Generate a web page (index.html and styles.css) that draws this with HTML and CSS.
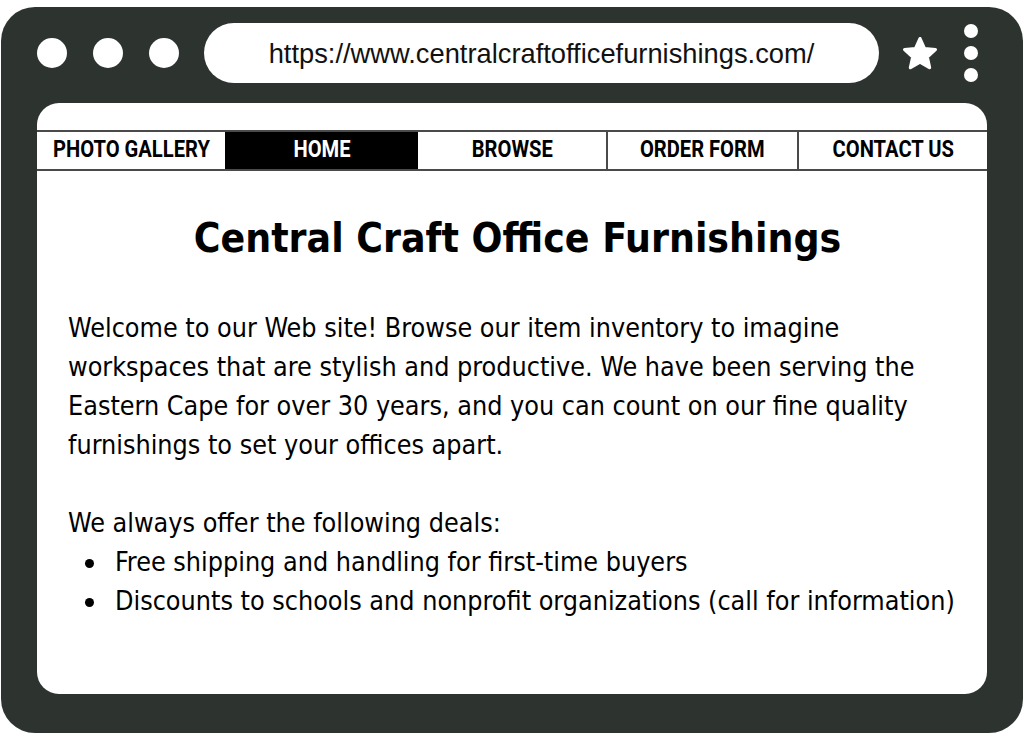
FILE: index.html
```html
<!DOCTYPE html>
<html lang="en">
<head>
<meta charset="utf-8">
<title>Central Craft Office Furnishings</title>
<link rel="stylesheet" href="styles.css">
</head>
<body>
<div class="frame">
  <div class="topbar">
    <div class="dots">
      <span class="dot"></span><span class="dot"></span><span class="dot"></span>
    </div>
    <div class="url">https://www.centralcraftofficefurnishings.com/</div>
    <svg class="star" viewBox="0 0 24 22" width="40" height="36" aria-hidden="true">
      <path d="M12 2.2l2.75 6.1 6.65.65-5 4.45 1.45 6.55L12 16.55 6.15 19.950 7.6 13.4l-5-4.45 6.65-.65z" fill="#fff" stroke="#fff" stroke-width="2" stroke-linejoin="round"/>
    </svg>
    <div class="kebab"><span></span><span></span><span></span></div>
  </div>
  <div class="page">
    <nav class="nav">
      <a class="nav-item"><span>PHOTO GALLERY</span></a>
      <a class="nav-item active"><span>HOME</span></a>
      <a class="nav-item"><span>BROWSE</span></a>
      <a class="nav-item"><span>ORDER FORM</span></a>
      <a class="nav-item"><span>CONTACT US</span></a>
    </nav>
    <main class="content">
      <h1 class="title">Central Craft Office Furnishings</h1>
      <p class="text">Welcome to our Web site! Browse our item inventory to imagine workspaces that are stylish and productive. We have been serving the Eastern Cape for over 30 years, and you can count on our fine quality furnishings to set your offices apart.</p>
      <p class="text deals">We always offer the following deals:</p>
      <ul class="list">
        <li>Free shipping and handling for first-time buyers</li>
        <li>Discounts to schools and nonprofit organizations (call for information)</li>
      </ul>
    </main>
  </div>
</div>
</body>
</html>
```
FILE: styles.css
```css
* { box-sizing: border-box; }
html, body { margin: 0; padding: 0; background: #fff; }
body { width: 1024px; height: 741px; overflow: hidden; padding: 7px 1px 8px 1px; }

.frame {
  height: 726px;
  background: #2d3430;
  border-radius: 34px;
  padding: 0 36px 39px 36px;
  display: flex;
  flex-direction: column;
}

.topbar {
  height: 96px;
  padding: 16px 0 20px 0;
  display: flex;
  align-items: center;
}
.dots { display: flex; gap: 26px; }
.dot { width: 30px; height: 30px; border-radius: 50%; background: #fff; display: block; }
.url {
  margin-left: 25px;
  width: 675px;
  height: 60px;
  border-radius: 30px;
  background: #fff;
  display: flex;
  align-items: center;
  justify-content: center;
  padding-top: 2px;
  font-family: "Liberation Sans", Arial, sans-serif;
  font-size: 27.3px;
  color: #111;
}
.star { margin-left: 21px; display: block; }
.kebab { margin-left: 24px; display: flex; flex-direction: column; gap: 8px; }
.kebab span { width: 14px; height: 14px; border-radius: 50%; background: #fff; display: block; }

.page {
  flex: 1;
  background: #fff;
  border-radius: 22px;
  padding-top: 27px;
  overflow: hidden;
}

.nav {
  display: flex;
  height: 41px;
  border-top: 2px solid #4a4a4a;
  border-bottom: 2px solid #4a4a4a;
}
.nav-item {
  flex: 1;
  display: flex;
  align-items: center;
  justify-content: center;
  padding-bottom: 3px;
  border-left: 2px solid #4a4a4a;
  color: #000;
  text-decoration: none;
  font-family: Roboto, "Liberation Sans", sans-serif;
  font-weight: 700;
  font-size: 24px;
}
.nav-item:first-child { border-left: none; }
.nav-item span { display: inline-block; transform: scaleX(0.84); white-space: nowrap; }
.nav-item.active { background: #000; color: #fff; border-left-color: #000; }
.nav-item.active + .nav-item { border-left-color: #000; }

.content {
  padding: 0 20px 0 31px;
  font-family: "DejaVu Sans Condensed", "DejaVu Sans", sans-serif;
  color: #000;
}
.title {
  margin: 44px 0 46px 0;
  text-align: center;
  font-size: 40.5px;
  line-height: 47px;
  font-weight: 700;
}
.text {
  margin: 0;
  max-width: 860px;
  font-size: 26.7px;
  line-height: 39px;
}
.deals { margin-top: 39px; }
.list {
  margin: 0;
  padding-left: 17px;
  list-style: none;
  font-size: 26.7px;
  line-height: 39px;
}
.list li { white-space: nowrap; }
.list li::before {
  content: "";
  display: inline-block;
  width: 9px;
  height: 9px;
  border-radius: 50%;
  background: #000;
  margin-right: 21px;
  vertical-align: middle;
}
```
